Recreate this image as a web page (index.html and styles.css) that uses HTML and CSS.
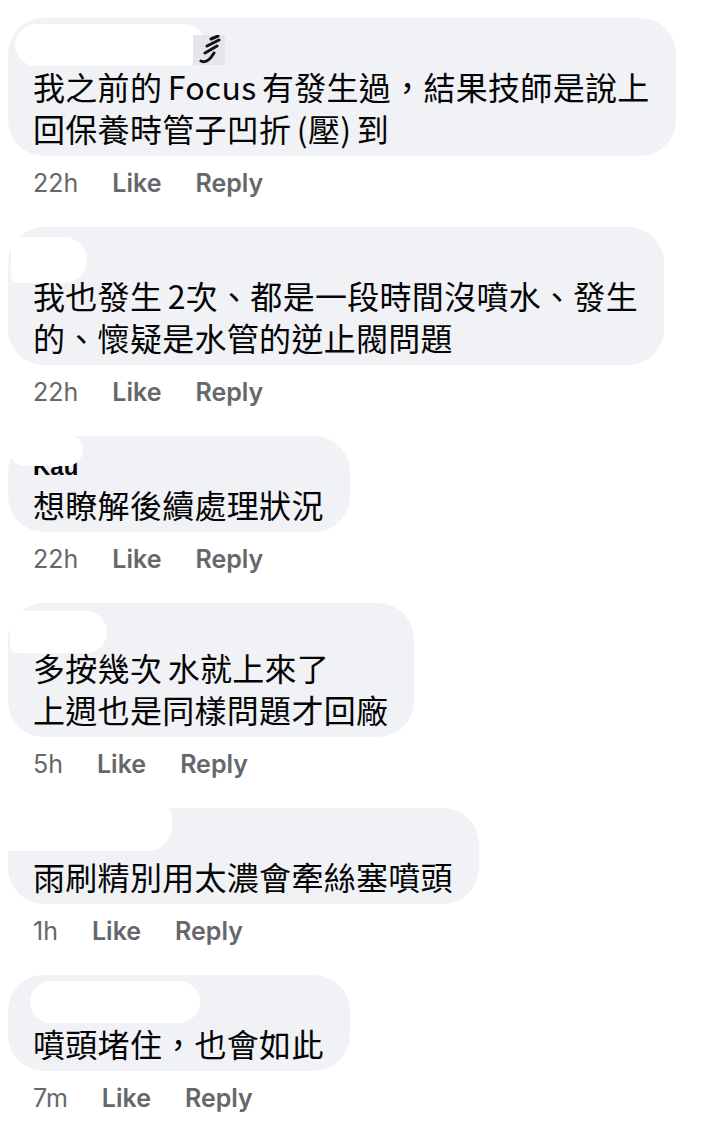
FILE: index.html
```html
<!DOCTYPE html>
<html lang="zh-Hant">
<head>
    <meta charset="UTF-8">
    <meta name="viewport" content="width=device-width, initial-scale=1.0">
    <title>Comments</title>
    <link rel="stylesheet" href="styles.css">
</head>
<body>
    <main class="comments">

        <!-- Comment 1 -->
        <div class="comment">
            <div class="bubble">
                <div class="name"></div>
                <span class="mask mask-1"></span>
                <svg class="scrawl" width="32" height="30" viewBox="0 0 32 30">
                    <rect width="32" height="30" fill="#e4e6ea"/>
                    <path d="M18 4 L25 1 M14 11 L26 5 M12 18 L24 11 M8 26 C12 28 17 25 21 18" fill="none" stroke="#111" stroke-width="3" stroke-linecap="round"/>
                </svg>
                <p class="text">我之前的 Focus 有發生過，結果技師是說上<br>回保養時管子凹折 (壓) 到</p>
            </div>
            <div class="meta"><span>22h</span><span class="action">Like</span><span class="action">Reply</span></div>
        </div>

        <!-- Comment 2 -->
        <div class="comment">
            <div class="bubble">
                <div class="name"></div>
                <span class="mask mask-2"></span>
                <p class="text">我也發生 2次、都是一段時間沒噴水、發生<br>的、懷疑是水管的逆止閥問題</p>
            </div>
            <div class="meta"><span>22h</span><span class="action">Like</span><span class="action">Reply</span></div>
        </div>

        <!-- Comment 3 -->
        <div class="comment">
            <div class="bubble">
                <div class="name">Kau</div>
                <span class="mask mask-3"></span>
                <p class="text">想瞭解後續處理狀況</p>
            </div>
            <div class="meta"><span>22h</span><span class="action">Like</span><span class="action">Reply</span></div>
        </div>

        <!-- Comment 4 -->
        <div class="comment">
            <div class="bubble tight">
                <div class="name"></div>
                <span class="mask mask-4"></span>
                <p class="text">多按幾次 水就上來了<br>上週也是同樣問題才回廠</p>
            </div>
            <div class="meta"><span>5h</span><span class="action">Like</span><span class="action">Reply</span></div>
        </div>

        <!-- Comment 5 -->
        <div class="comment">
            <div class="bubble">
                <div class="name"></div>
                <span class="mask mask-5"></span>
                <p class="text">雨刷精別用太濃會牽絲塞噴頭</p>
            </div>
            <div class="meta"><span>1h</span><span class="action">Like</span><span class="action">Reply</span></div>
        </div>

        <!-- Comment 6 -->
        <div class="comment">
            <div class="bubble">
                <div class="name"></div>
                <span class="mask mask-6"></span>
                <p class="text">噴頭堵住，也會如此</p>
            </div>
            <div class="meta"><span>7m</span><span class="action">Like</span><span class="action">Reply</span></div>
        </div>

    </main>
</body>
</html>
```

FILE: styles.css
```css
/* General */
body {
    margin: 0;
    background: #fff;
    font-family: "Noto Sans CJK TC", "Noto Sans CJK SC", sans-serif;
}
.comments {
    display: flex;
    flex-direction: column;
    align-items: flex-start;
    padding: 18px 8px 0;
}
.comment {
    display: flex;
    flex-direction: column;
    align-items: flex-start;
    margin-bottom: 30px;
}

/* Bubble */
.bubble {
    position: relative;
    padding: 7px 26px 7px 25px;
    border-radius: 36px;
    background: #f0f2f5;
}
.bubble.tight .name {
    height: 36px;
}
.name {
    height: 40px;
    overflow: hidden;
    color: #050505;
    font: 700 24px/48px "Liberation Sans", sans-serif;
}
.text {
    margin: 0;
    color: #050505;
    font-size: 32px;
    line-height: 42px;
    letter-spacing: .3px;
    word-spacing: -2px;
}

/* Meta row */
.meta {
    display: flex;
    gap: 34px;
    margin-top: 13px;
    padding-left: 25px;
    color: #65676b;
    font: 400 25px/28px Inter, "Liberation Sans", sans-serif;
}
.meta .action {
    font-weight: 600;
}

/* Redacted names */
.mask {
    position: absolute;
    background: #fff;
    border-radius: 21px;
}
.mask-1 { left: 7px;  top: 6px;   width: 190px; height: 42px; }
.mask-2 { left: 3px;  top: 10px;  width: 76px;  height: 46px; border-radius: 8px 24px 24px 8px; }
.mask-3 { left: 2px;  top: -2px;  width: 73px;  height: 32px; border-radius: 6px 18px 18px 16px; }
.mask-4 { left: 2px;  top: 8px;   width: 97px;  height: 42px; border-radius: 8px 21px 21px 8px; }
.mask-5 { left: 0;    top: -10px; width: 164px; height: 53px; border-radius: 0 22px 24px 0; }
.mask-6 { left: 22px; top: 6px;   width: 170px; height: 42px; }
.scrawl {
    position: absolute;
    left: 185px;
    top: 17px;
}
```
